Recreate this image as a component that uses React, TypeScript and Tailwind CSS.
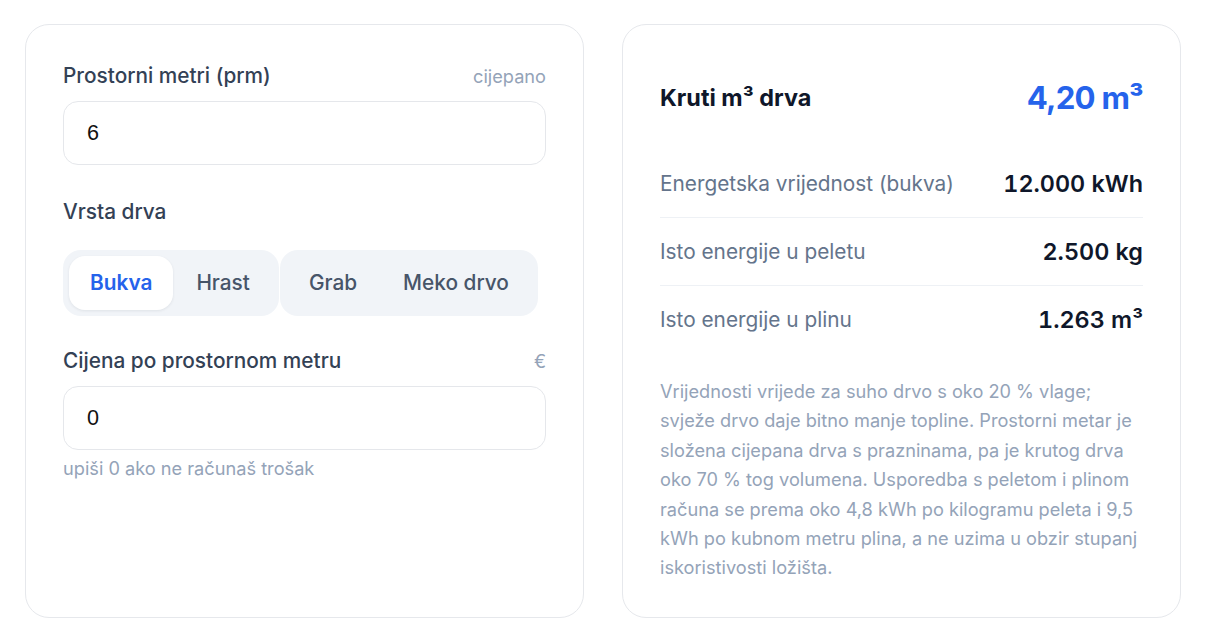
import { useState } from 'react';

const WOODS = [
  ['Bukva', 'Hrast'],
  ['Grab', 'Meko drvo'],
];

const ROWS = [
  { label: 'Energetska vrijednost (bukva)', value: '12.000 kWh' },
  { label: 'Isto energije u peletu', value: '2.500 kg' },
  { label: 'Isto energije u plinu', value: '1.263 m³' },
];

function Field({
  label,
  hint,
  value,
  onChange,
}: {
  label: string;
  hint: string;
  value: string;
  onChange: (v: string) => void;
}) {
  return (
    <div>
      <div className="flex items-baseline justify-between h-[32px] leading-[32px]">
        <span className="text-[20.8px] font-medium text-[#334155]">{label}</span>
        <span className="text-[18.2px] text-[#94a3b8]">{hint}</span>
      </div>
      <input
        value={value}
        onChange={(e) => onChange(e.target.value)}
        className="mt-[9px] block w-full h-[64px] rounded-[15px] border border-[#e5e7eb] bg-white px-[23px] text-[21.6px] text-[#111111] outline-none [font-family:'Liberation_Sans',Arial,sans-serif]"
      />
    </div>
  );
}

export default function App() {
  const [prm, setPrm] = useState('6');
  const [price, setPrice] = useState('0');
  const [wood, setWood] = useState('Bukva');

  return (
    <div className="min-h-screen bg-white px-[25px] pt-[24px] pb-[25px] [font-family:Inter,'Noto_Sans',sans-serif]">
      <div className="grid grid-cols-2 gap-[38px]">
        {/* Inputs */}
        <div className="rounded-[24px] border border-[#e6e8ec] bg-white px-[37px] pt-[35px]">
          <Field label="Prostorni metri (prm)" hint="cijepano" value={prm} onChange={setPrm} />

          <div className="mt-[31px] h-[32px] leading-[32px] text-[20.8px] font-medium text-[#334155]">
            Vrsta drva
          </div>
          <div className="mt-[22px] flex gap-[1px]">
            {WOODS.map((group, gi) => (
              <div key={gi} className="flex rounded-[18px] bg-[#f1f4f8] p-[6px]">
                {group.map((w) => (
                  <button
                    key={w}
                    onClick={() => setWood(w)}
                    className={
                      w === wood
                        ? 'h-[54px] rounded-[16px] bg-white px-[21px] text-[20.8px] font-semibold text-[#2563eb] shadow-[0_1px_3px_rgba(15,23,42,0.08)]'
                        : 'h-[54px] rounded-[16px] px-[23px] text-[20.8px] font-medium text-[#475569]'
                    }
                  >
                    {w}
                  </button>
                ))}
              </div>
            ))}
          </div>

          <div className="mt-[29px]">
            <Field label="Cijena po prostornom metru" hint="€" value={price} onChange={setPrice} />
          </div>
          <p className="mt-[6px] h-[24px] leading-[24px] text-[18.2px] text-[#94a3b8]">
            upiši 0 ako ne računaš trošak
          </p>
        </div>

        {/* Results */}
        <div className="rounded-[24px] border border-[#e6e8ec] bg-white px-[37px] pt-[37px] pb-[34px]">
          <div className="flex h-[72px] items-center justify-between">
            <span className="text-[23.4px] font-bold text-[#0f172a]">Kruti m³ drva</span>
            <span className="text-[31.2px] font-bold tracking-tight text-[#2563eb]">4,20 m³</span>
          </div>
          <div className="mt-[16px]">
            {ROWS.map((r, i) => (
              <div
                key={r.label}
                className={
                  i < ROWS.length - 1
                    ? 'flex h-[68px] items-center justify-between border-b border-[#eef1f5]'
                    : 'flex h-[67px] items-center justify-between'
                }
              >
                <span className="text-[20.8px] text-[#64748b]">{r.label}</span>
                <span className="text-[23.4px] font-semibold tabular-nums text-[#0f172a]">{r.value}</span>
              </div>
            ))}
          </div>
          <p className="mt-[24px] text-[18.2px] leading-[29.4px] text-[#94a3b8]">
            Vrijednosti vrijede za suho drvo s oko 20 % vlage; svježe drvo daje bitno manje topline.
            Prostorni metar je složena cijepana drva s prazninama, pa je krutog drva oko 70 % tog
            volumena. Usporedba s peletom i plinom računa se prema oko 4,8 kWh po kilogramu peleta i
            9,5 kWh po kubnom metru plina, a ne uzima u obzir stupanj iskoristivosti ložišta.
          </p>
        </div>
      </div>
    </div>
  );
}
